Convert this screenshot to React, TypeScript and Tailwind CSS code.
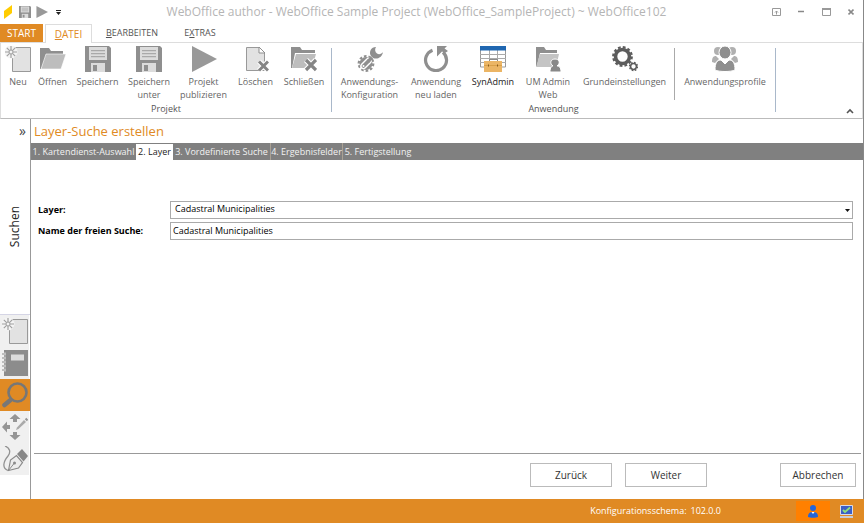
import { useState } from 'react'
import type { ReactNode } from 'react'
import clsx from 'clsx'

function FloppyIcon({ className }: { className: string }) {
  return (
    <svg viewBox="0 0 26 26" className={className}>
      <path d="M0 0h24l2 2v24H0z" fill="#8f8f8f" />
      <path d="M4 1h18v13H4z" fill="#dcdcdc" />
      <path d="M6 4h14v1.200H6zM6 7h14v1.200H6zM6 10h14v1.200H6z" fill="#a9a9a9" />
      <path d="M6 17h14v9H6z" fill="#dcdcdc" />
      <path d="M8 19h4v6H8z" fill="#8f8f8f" />
    </svg>
  )
}

function PlayIcon({ className }: { className: string }) {
  return (
    <svg viewBox="0 0 26 26" className={className}>
      <path d="M1 0 26 13 1 26z" fill="#999" />
    </svg>
  )
}

function NewIcon({ className }: { className: string }) {
  return (
    <svg viewBox="0 0 26 26" className={className}>
      <path d="M7.500 1.500h18v24h-18z" fill="#e2e2e2" stroke="#999" />
      <circle cx="6" cy="6" r="6.500" fill="#f4f4f4" />
      <path d="M6 0v12M0 6h12M1.800 1.800l8.400 8.400M10.200 1.800l-8.400 8.400" stroke="#a0a0a0" strokeWidth="1.200" />
      <circle cx="6" cy="6" r="2" fill="#f4f4f4" stroke="#a0a0a0" />
    </svg>
  )
}

function FolderIcon() {
  return (
    <svg viewBox="0 0 26 26" className="h-[26px] w-[26px]">
      <path d="M0 2h9l2 3h12v7H6L1 23H0z" fill="#8f8f8f" />
      <path d="M6 8h20l-5 15H1z" fill="#bdbdbd" stroke="#fff" strokeWidth="0.600" />
    </svg>
  )
}

function DeleteIcon() {
  return (
    <svg viewBox="0 0 26 26" className="h-[26px] w-[26px]">
      <path d="M3.500 1.500h13l5 5v18h-18z" fill="#e2e2e2" stroke="#999" />
      <path d="M16 1v6h6z" fill="#fff" stroke="#8f8f8f" />
      <path d="M16 15.500 25 24.500M25 15.500 16 24.500" stroke="#fff" strokeWidth="5" />
      <path d="M16 15.500 25 24.500M25 15.500 16 24.500" stroke="#858585" strokeWidth="3" />
    </svg>
  )
}

function CloseProjectIcon() {
  return (
    <svg viewBox="0 0 26 26" className="h-[26px] w-[26px]">
      <path d="M0 1h9l2 3h13v3H4L1 22H0z" fill="#8f8f8f" />
      <path d="M5 8h20l-4 14H1z" fill="#bdbdbd" />
      <path d="M15 14 25 24M25 14 15 24" stroke="#fff" strokeWidth="5.500" />
      <path d="M15 14 25 24M25 14 15 24" stroke="#858585" strokeWidth="3.200" />
    </svg>
  )
}

function ConfigIcon() {
  return (
    <svg viewBox="0 0 26 26" className="h-[26px] w-[26px]">
      <circle cx="9" cy="17.500" r="7.300" fill="none" stroke="#8f8f8f" strokeWidth="2.200" strokeDasharray="2.600 1.980" />
      <circle cx="9" cy="17.500" r="6.500" fill="#8f8f8f" />
      <path d="M6.500 20 11.500 15" stroke="#fff" strokeWidth="6.500" strokeLinecap="round" />
      <path d="M6.500 20 11.500 15" stroke="#8f8f8f" strokeWidth="3.800" strokeLinecap="round" />
      <circle cx="6.500" cy="20" r="1" fill="#fff" />
      <path d="m11.500 15 3.500-3.500" stroke="#8f8f8f" strokeWidth="3.400" />
      <path d="M19 1c-5 0-7.500 5-5 9 3 4.500 11 3 12-4-1.500 2-4 3-6 1.500S17.500 3 19 1z" fill="#8f8f8f" />
    </svg>
  )
}

function ReloadIcon() {
  return (
    <svg viewBox="0 0 26 26" className="h-[26px] w-[26px]">
      <path d="M9.500 4.200A10.500 10.500 0 1 0 20 6.200" fill="none" stroke="#8f8f8f" strokeWidth="3.200" />
      <path d="M14 0h10l-2.500 2.500L25 5l-3 2-3-1.500-5 5z" fill="#8f8f8f" />
    </svg>
  )
}

function SynAdminIcon() {
  return (
    <svg viewBox="0 0 26 26" className="h-[26px] w-[26px]">
      <path d="M.5 1h25v20H.5z" fill="#fff" stroke="#999" />
      <path d="M0 8.500h26M0 12.500h26M0 16.500h26M9.500 4v14M17.500 4v14" stroke="#aaa" />
      <path d="M0 0h26v4.500H0z" fill="#1f66b0" />
      <path d="M9.500 15v-1.500h8V15" fill="none" stroke="#8a8a8a" />
      <path d="M4 15h18v11H4z" fill="#ebb565" />
      <path d="M4 19.500h18" stroke="#d9a049" />
      <path d="M8 18.500h1v2H8zM17 18.500h1v2h-1z" fill="#875b1d" />
    </svg>
  )
}

function UserFolderIcon() {
  return (
    <svg viewBox="0 0 26 26" className="h-[26px] w-[26px]">
      <path d="M1 1h8l2 3h11v3H5L2 20H1z" fill="#8f8f8f" />
      <path d="M5 8h19l-3 13H1z" fill="#c4c4c4" />
      <path d="M15 26c0-5 2-6 3-6-4-3-2-7 2-7s6 4 2 7c2 0 4 1 4 6z" fill="#888" stroke="#fff" />
    </svg>
  )
}

function SettingsIcon() {
  return (
    <svg viewBox="0 0 26 26" className="h-[26px] w-[26px]">
      <circle cx="10.500" cy="10.500" r="9.300" fill="none" stroke="#5c5c5c" strokeWidth="2.200" strokeDasharray="2.800 2.070" />
      <circle cx="10.500" cy="10.500" r="7" fill="none" stroke="#5c5c5c" strokeWidth="3.600" />
      <circle cx="21.500" cy="20.500" r="4" fill="none" stroke="#5c5c5c" strokeWidth="1.400" strokeDasharray="1.700 1.440" />
      <circle cx="21.500" cy="20.500" r="2.900" fill="none" stroke="#5c5c5c" strokeWidth="1.500" />
    </svg>
  )
}

function ProfilesIcon() {
  return (
    <svg viewBox="0 0 26 26" className="h-[26px] w-[26px]">
      <g fill="#b0b0b0">
        <circle cx="6" cy="5" r="4" />
        <circle cx="20" cy="5" r="4" />
        <path d="M0 16c0-4 1-6 4-6l3 3-4 4zM26 16c0-4-1-6-4-6l-3 3 4 4z" />
      </g>
      <ellipse cx="13" cy="6.500" rx="6" ry="6.500" fill="#8f8f8f" stroke="#fff" />
      <path d="M3 24c0-7 2-10 6-10l4 4 4-4c4 0 6 3 6 10-4 2-16 2-20 0z" fill="#8f8f8f" stroke="#fff" />
    </svg>
  )
}

function BookIcon() {
  return (
    <svg viewBox="0 0 26 26" className="h-[26px] w-[26px]">
      <path d="M2 0h24v26H2z" fill="#8c8c8c" />
      <path d="M9 4.500h13v6H9z" fill="#dcdcdc" />
      <path d="M0 4h4M0 8h4M0 12h4M0 16h4M0 20h4" stroke="#efefef" strokeWidth="2.400" />
      <path d="M0 4h4M0 8h4M0 12h4M0 16h4M0 20h4" stroke="#8c8c8c" strokeWidth="1.200" />
    </svg>
  )
}

function SearchIcon() {
  return (
    <svg viewBox="0 0 26 26" className="h-[26px] w-[26px]">
      <circle cx="15.500" cy="10.500" r="9" fill="none" stroke="#777" strokeWidth="2.600" />
      <path d="m8.500 18-6 5" stroke="#777" strokeWidth="4.500" strokeLinecap="round" />
    </svg>
  )
}

function EditMoveIcon() {
  return (
    <svg viewBox="0 0 26 26" className="h-[26px] w-[26px]">
      <path d="m13 0 5.500 5H15v3h-4V5H7.500zM13 26l-5.500-5H11v-3h4v3h3.500zM0 13l5-5.500V11h3v4H5v3.500z" fill="#959595" />
      <path d="m15 13.500 7-7.500 2 2-7.500 7-2.500 1z" fill="#aaa" />
      <path d="m22.800 5.200 1.500-1.500 2 2-1.500 1.500z" fill="#959595" />
    </svg>
  )
}

function PenIcon() {
  return (
    <svg viewBox="0 0 26 26" className="h-[26px] w-[26px]">
      <path d="M3 0c5 2 6 6 3 10-5 6-6 12 0 14.500" fill="none" stroke="#929292" strokeWidth="1.300" />
      <path d="M6.500 24.500 8.500 14l6-4.500 6 7-4 5.500z" fill="#ececec" stroke="#8a8a8a" strokeWidth="1.200" />
      <path d="m6.500 24.500 5.500-7" stroke="#8a8a8a" />
      <circle cx="12.500" cy="17" r="1.500" fill="#8a8a8a" />
      <path d="m15 8 5-5 6 7-4.500 5.500z" fill="#888" />
    </svg>
  )
}

type RibbonItem = { label: string[]; icon: ReactNode; width: string; active?: boolean }

const projectItems: RibbonItem[] = [
  { label: ['Neu'], icon: <NewIcon className="h-[26px] w-[26px]" />, width: 'w-[34px]' },
  { label: ['Öffnen'], icon: <FolderIcon />, width: 'w-[35px]' },
  { label: ['Speichern'], icon: <FloppyIcon className="h-[26px] w-[26px]" />, width: 'w-[55px]' },
  { label: ['Speichern', 'unter'], icon: <FloppyIcon className="h-[26px] w-[26px]" />, width: 'w-12' },
  { label: ['Projekt', 'publizieren'], icon: <PlayIcon className="h-[26px] w-[26px]" />, width: 'w-[61px]' },
  { label: ['Löschen'], icon: <DeleteIcon />, width: 'w-[43px]' },
  { label: ['Schließen'], icon: <CloseProjectIcon />, width: 'w-[54px]' },
]

const applicationItems: RibbonItem[] = [
  { label: ['Anwendungs-', 'Konfiguration'], icon: <ConfigIcon />, width: 'w-[75px]' },
  { label: ['Anwendung', 'neu laden'], icon: <ReloadIcon />, width: 'w-[58px]' },
  { label: ['SynAdmin'], icon: <SynAdminIcon />, width: 'w-14', active: true },
  { label: ['UM Admin', 'Web'], icon: <UserFolderIcon />, width: 'w-[54px]' },
  { label: ['Grundeinstellungen'], icon: <SettingsIcon />, width: 'w-[99px]' },
]

const profileItems: RibbonItem[] = [
  { label: ['Anwendungsprofile'], icon: <ProfilesIcon />, width: 'w-[100px]' },
]

const wizardSteps = [
  '1. Kartendienst-Auswahl',
  '2. Layer',
  '3. Vordefinierte Suche',
  '4. Ergebnisfelder',
  '5. Fertigstellung',
]

const stepWidths = ['w-[105px]', 'w-[37px]', 'w-[98px]', 'w-[72px]', 'w-[70px]']

const sideTools = [
  { name: 'Neu', icon: <NewIcon className="h-[26px] w-[26px]" /> },
  { name: 'Projekt', icon: <BookIcon /> },
  { name: 'Suchen', icon: <SearchIcon /> },
  { name: 'Bearbeiten', icon: <EditMoveIcon /> },
  { name: 'Zeichnen', icon: <PenIcon /> },
]

function RibbonButtons({ items }: { items: RibbonItem[] }) {
  return (
    <div className="flex">
      {items.map((item, i) => (
        <button
          key={i}
          type="button"
          className={clsx(
            'flex shrink-0 flex-col items-center whitespace-nowrap text-[9px] leading-[13px]',
            item.width,
            item.active ? 'text-[#222]' : 'text-[#666]'
          )}
        >
          {item.icon}
          <span className="mt-[3px]">
            {item.label.map((line) => (
              <span key={line} className="block">{line}</span>
            ))}
          </span>
        </button>
      ))}
    </div>
  )
}

function TitleBar() {
  return (
    <header className="flex h-6 items-center pl-1">
      <svg viewBox="0 0 8 14" className="h-[14px] w-2">
        <path d="M0 6 8 0v8L0 14z" fill="#fc0" />
      </svg>
      <button type="button" aria-label="Speichern" className="ml-[7px]">
        <FloppyIcon className="h-3 w-3" />
      </button>
      <button type="button" aria-label="Publizieren" className="ml-[5px]">
        <PlayIcon className="h-3 w-3" />
      </button>
      <button type="button" aria-label="Schnellzugriff anpassen" className="ml-2">
        <svg viewBox="0 0 5 5" className="h-[5px] w-[5px]">
          <path d="M0 0h5v1H0zM0 2h5L2.500 5z" fill="#222" />
        </svg>
      </button>
      <h1 className="flex-1 text-center text-xs whitespace-nowrap text-[#b5b5b5]">
        WebOffice author - WebOffice Sample Project (WebOffice_SampleProject) ~ WebOffice102
      </h1>
      <div className="flex w-[91px] items-center justify-between pr-[9px]">
        <button type="button" aria-label="Menüband anzeigen">
          <svg viewBox="0 0 9 8" className="h-2 w-[9px]" fill="none" stroke="#999">
            <path d="M.5.5h8v7h-8zM4.500 6.500V3M3 4.500 4.500 3 6 4.500" />
          </svg>
        </button>
        <button type="button" aria-label="Minimieren">
          <svg viewBox="0 0 6 8" className="h-2 w-1.5">
            <path d="M0 3.500h6" stroke="#888" strokeWidth="1.500" />
          </svg>
        </button>
        <button type="button" aria-label="Maximieren">
          <svg viewBox="0 0 9 8" className="h-2 w-[9px]">
            <path d="M.5.5h8v7h-8z" fill="none" stroke="#999" />
            <path d="M0 0h9v2H0z" fill="#999" />
          </svg>
        </button>
        <button type="button" aria-label="Schließen">
          <svg viewBox="0 0 6 8" className="h-2 w-1.5">
            <path d="m.5 1.500 5 5M5.500 1.500l-5 5" stroke="#888" strokeWidth="1.600" />
          </svg>
        </button>
      </div>
    </header>
  )
}

function Ribbon() {
  return (
    <>
      <nav className="flex h-[18px] text-[10px] leading-[18px] text-[#555]">
        <button type="button" className="w-[43px] bg-[#e08a24] text-white">START</button>
        <button type="button" className="z-10 -mb-px ml-0.5 w-[47px] border border-b-0 border-[#ddd] bg-white text-[#e08a24]">
          <u>D</u>ATEI
        </button>
        <button type="button" className="w-20 text-[9px]"><u>B</u>EARBEITEN</button>
        <button type="button" className="w-14 text-[9px]">E<u>X</u>TRAS</button>
      </nav>
      <section className="flex h-[77px] border border-[#ddd] border-b-[#bbb] pt-[3px]">
        <div className="flex w-[330px] shrink-0 flex-col justify-between pb-px">
          <RibbonButtons items={projectItems} />
          <span className="text-center text-[9px] leading-4 text-[#555]">Projekt</span>
        </div>
        <div className="mt-0.5 mb-1.5 w-px shrink-0 bg-[#a9b8ca]" />
        <div className="flex shrink-0 flex-col justify-between pb-px">
          <div className="flex">
            <RibbonButtons items={applicationItems} />
            <div className="mt-0.5 h-[52px] w-px bg-[#aaa]" />
            <RibbonButtons items={profileItems} />
          </div>
          <span className="text-center text-[9px] leading-4 text-[#555]">Anwendung</span>
        </div>
        <div className="mt-0.5 mb-1.5 w-px shrink-0 bg-[#a9b8ca]" />
        <button type="button" aria-label="Menüband reduzieren" className="mt-auto mr-2 mb-1 ml-auto">
          <svg viewBox="0 0 8 6" className="h-1.5 w-2">
            <path d="m1 5 3-3 3 3" fill="none" stroke="#555" strokeWidth="1.600" />
          </svg>
        </button>
      </section>
    </>
  )
}

function SideBar() {
  return (
    <aside className="flex w-[31px] shrink-0 flex-col border-r border-[#999]">
      <button type="button" aria-label="Ausklappen" className="mt-1 mr-1 self-end text-sm leading-4 text-[#444]">»</button>
      <div className="flex flex-1 items-center justify-center border-b border-[#d5d5e5]">
        <span className="rotate-180 text-xs leading-5 text-[#222] [writing-mode:vertical-rl]">Suchen</span>
      </div>
      <div className="mb-6 flex flex-col">
        {sideTools.map((tool) => (
          <button
            key={tool.name}
            type="button"
            aria-label={tool.name}
            className={clsx(
              'flex h-8 items-center justify-center',
              tool.name === 'Suchen' ? 'bg-[#e08a24]' : 'mr-px bg-[#f0f0f0]'
            )}
          >
            {tool.icon}
          </button>
        ))}
      </div>
    </aside>
  )
}

export default function App() {
  const [step, setStep] = useState(1)
  const [layer, setLayer] = useState('Cadastral Municipalities')
  const [searchName, setSearchName] = useState('Cadastral Municipalities')

  return (
    <div className="flex min-h-screen flex-col bg-white pb-px font-['Open_Sans','Noto_Sans',sans-serif]">
      <div className="flex flex-1 flex-col border-r border-[#888]">
        <TitleBar />
        <Ribbon />
        <div className="flex flex-1">
          <SideBar />
          <main className="flex min-w-0 flex-1 flex-col">
            <h2 className="pl-[3px] text-[13px] leading-6 text-[#e08a24]">Layer-Suche erstellen</h2>
            <div role="tablist" className="flex h-[17px] bg-[#808080] text-[9px] leading-4">
              {wizardSteps.map((label, i) => (
                <button
                  key={label}
                  type="button"
                  role="tab"
                  aria-selected={i === step}
                  onClick={() => setStep(i)}
                  className={clsx(
                    'shrink-0 whitespace-nowrap',
                    stepWidths[i],
                    i === step ? 'mt-px bg-white text-[#222]' : 'text-[#f2f2f2]',
                    (i === 2 || i === 3) && 'border-r border-[#aaa194]'
                  )}
                >
                  {label}
                </button>
              ))}
            </div>
            <form className="mt-[41px] grid grid-cols-[132px_1fr] items-center gap-y-[3px] pr-2.5 pl-[7px] text-[9px] text-black">
              <label htmlFor="layer" className="font-bold">Layer:</label>
              <div className="relative">
                <select
                  id="layer"
                  value={layer}
                  onChange={(e) => setLayer(e.target.value)}
                  className="block h-[18px] w-full appearance-none border border-[#aaa] bg-white pb-0.5 pl-1"
                >
                  <option>Cadastral Municipalities</option>
                </select>
                <svg viewBox="0 0 5 3" className="pointer-events-none absolute top-2 right-[3px] h-[3px] w-[5px]">
                  <path d="M0 0h5L2.500 3z" fill="#111" />
                </svg>
              </div>
              <label htmlFor="name" className="font-bold">Name der freien Suche:</label>
              <input
                id="name"
                type="text"
                value={searchName}
                onChange={(e) => setSearchName(e.target.value)}
                className="block h-[18px] w-full border border-[#aaa] px-0.5 pb-0.5"
              />
            </form>
            <div className="mt-auto mr-0.5 ml-[3px] border-t border-[#999]" />
            <div className="flex justify-end pt-[9px] pr-[7px] pb-3 text-[10px] text-[#333]">
              <button type="button" className="h-6 w-[82px] border border-[#bbb]">Zurück</button>
              <button type="button" className="ml-[13px] h-6 w-[82px] border border-[#bbb]">Weiter</button>
              <button type="button" className="ml-[73px] h-6 w-[76px] border border-[#bbb]">Abbrechen</button>
            </div>
          </main>
        </div>
      </div>
      <footer className="flex h-6 items-center justify-end bg-[#e08a24] pr-2.5 text-[9px] text-white">
        <span>Konfigurationsschema:</span>
        <span className="ml-1">102.0.0</span>
        <button type="button" aria-label="Benutzer" className="ml-[75px] flex h-5 w-[34px] items-center justify-center bg-[#ff8000]">
          <svg viewBox="0 0 10 13" className="h-[13px] w-2.5" fill="#2565d8">
            <circle cx="5" cy="3" r="3" />
            <path d="M0 12c0-4 2-5 5-5s5 1 5 5c-2 1-8 1-10 0z" />
            <path d="m3.500 7 1.500 2 1.500-2z" fill="#fff" />
          </svg>
        </button>
        <button type="button" aria-label="Verbindung" className="ml-2.5">
          <svg viewBox="0 0 14 13" className="h-[13px] w-3.5">
            <path d="M.5.5h12v9H.5z" fill="#3c5fc4" stroke="#d9dbe6" />
            <path d="m3 5 2 2 5-4.500" fill="none" stroke="#8fe07c" strokeWidth="1.800" />
            <path d="M0 11h13v2H0z" fill="#c9ccd8" />
          </svg>
        </button>
      </footer>
    </div>
  )
}
